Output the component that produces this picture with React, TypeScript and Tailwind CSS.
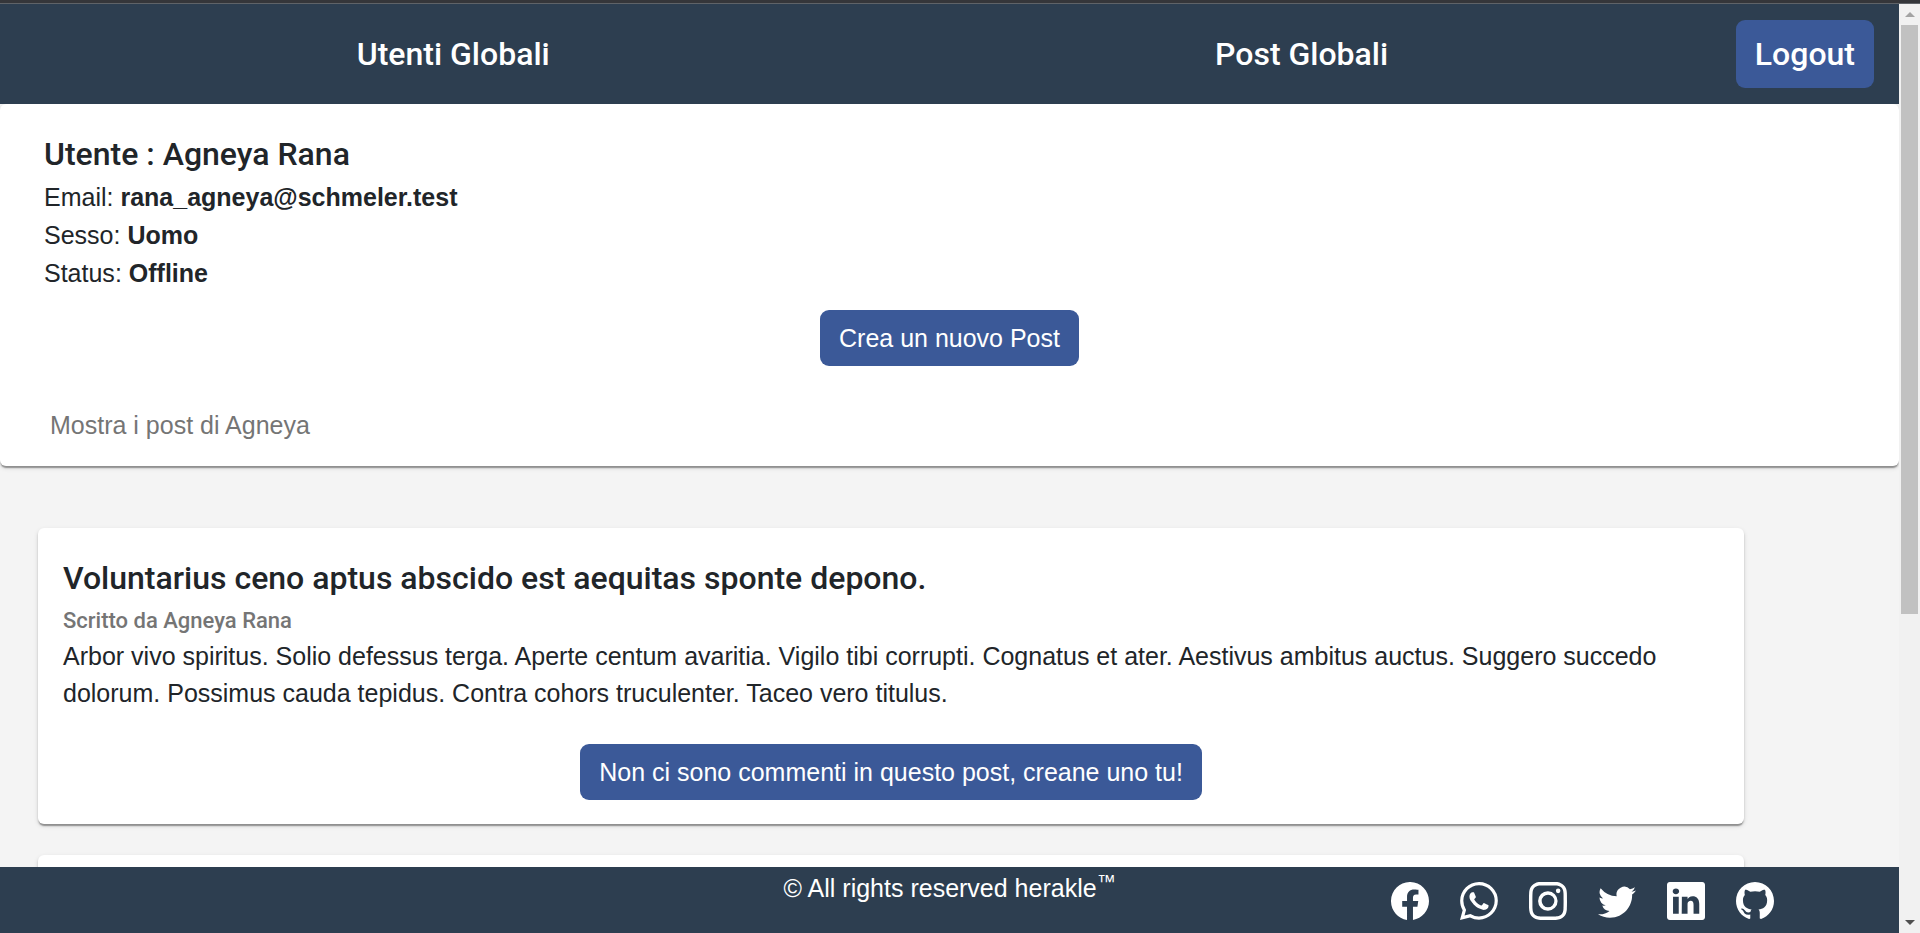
import type { ReactNode } from "react";
import {
  BsFacebook,
  BsGithub,
  BsInstagram,
  BsLinkedin,
  BsTwitter,
  BsWhatsapp,
} from "react-icons/bs";

const cardShadow =
  "shadow-[0_3px_1px_-1px_rgba(0,0,0,0.22),0_2px_2px_0_rgba(0,0,0,0.18),0_2px_5px_0_rgba(0,0,0,0.12)]";

const socials = [
  { label: "Facebook", Icon: BsFacebook },
  { label: "WhatsApp", Icon: BsWhatsapp },
  { label: "Instagram", Icon: BsInstagram },
  { label: "Twitter", Icon: BsTwitter },
  { label: "LinkedIn", Icon: BsLinkedin },
  { label: "GitHub", Icon: BsGithub },
];

const userFields = [
  { name: "Email", value: "rana_agneya@schmeler.test" },
  { name: "Sesso", value: "Uomo" },
  { name: "Status", value: "Offline" },
];

function ActionButton({ children }: { children: ReactNode }) {
  return (
    <button
      type="button"
      className="h-14 rounded-[9px] bg-[#3b5998] px-[19px] text-[25px] leading-[37px] text-white"
    >
      {children}
    </button>
  );
}

function Header() {
  return (
    <header className="flex h-[100px] shrink-0 items-center gap-[10px] bg-[#2d3e50] pr-[25px] pl-[29px] font-[Roboto,sans-serif] text-[32px] font-medium text-white">
      <nav className="flex flex-1 text-center">
        <div className="flex-1">
          <a href="#utenti">Utenti Globali</a>
        </div>
        <div className="flex-1">
          <a href="#post">Post Globali</a>
        </div>
      </nav>
      <button type="button" className="h-[68px] rounded-[9px] bg-[#3b5998] px-[19px]">
        Logout
      </button>
    </header>
  );
}

function UserCard() {
  return (
    <section className={`rounded-md bg-white px-11 pt-[30px] pb-[22px] ${cardShadow}`}>
      <h1 className="font-[Roboto,sans-serif] text-[32px] leading-10 font-medium">
        Utente : Agneya Rana
      </h1>
      <div className="pt-1 leading-[38px]">
        {userFields.map((field) => (
          <p key={field.name}>
            {field.name}: <strong>{field.value}</strong>
          </p>
        ))}
      </div>
      <div className="flex justify-center pt-[18px]">
        <ActionButton>Crea un nuovo Post</ActionButton>
      </div>
      <button type="button" className="mt-[41px] px-[6px] text-[#757575]">
        Mostra i post di Agneya
      </button>
    </section>
  );
}

function PostCard({ title, author, body }: { title: string; author: string; body: string }) {
  return (
    <article className={`w-[95%] rounded-md bg-white px-[25px] pt-[30px] pb-6 ${cardShadow}`}>
      <h2 className="font-[Roboto,sans-serif] text-[32px] leading-10 font-medium">
        {title}
      </h2>
      <p className="pt-[5px] font-[Roboto,sans-serif] text-[22px] leading-[35px] font-medium text-[#757575]">
        {author}
      </p>
      <p>{body}</p>
      <div className="flex justify-center pt-8">
        <ActionButton>Non ci sono commenti in questo post, creane uno tu!</ActionButton>
      </div>
    </article>
  );
}

function Footer() {
  return (
    <footer className="grid h-[66px] shrink-0 grid-cols-3 bg-[#2d3e50] text-white">
      <p className="col-start-2 pt-[3px] text-center">
        © All rights reserved herakle<sup>™</sup>
      </p>
      <ul className="flex items-start justify-end gap-[31px] pt-[15px] pr-[125px]">
        {socials.map(({ label, Icon }) => (
          <li key={label}>
            <a href={`#${label.toLowerCase()}`} aria-label={label}>
              <Icon className="size-[38px]" />
            </a>
          </li>
        ))}
      </ul>
    </footer>
  );
}

function Scrollbar() {
  return (
    <div aria-hidden="true" className="flex w-[21px] shrink-0 flex-col items-center justify-between bg-[#f1f1f1]">
      <div className="flex h-[21px] items-center">
        <svg viewBox="0 0 10 5" className="h-[5px] w-[10px] fill-[#a3a3a3]">
          <path d="M5 0 10 5H0Z" />
        </svg>
      </div>
      <div className="flex-1 self-stretch px-[2px]">
        <div className="h-[66.4%] bg-[#c1c1c1]" />
      </div>
      <div className="flex h-[21px] items-center">
        <svg viewBox="0 0 10 5" className="h-[5px] w-[10px] fill-[#505050]">
          <path d="M0 0H10L5 5Z" />
        </svg>
      </div>
    </div>
  );
}

export default function App() {
  return (
    <div className="flex h-screen flex-col overflow-hidden font-['Liberation_Sans',Arial,sans-serif] text-[25px] leading-[37px] text-[#212529]">
      <div className="h-1 shrink-0 border-b border-[#5f6368] bg-[#35363a]" />
      <div className="flex min-h-0 flex-1">
        <div className="flex min-w-0 flex-1 flex-col bg-[#f4f4f4]">
          <Header />
          <main className="min-h-0 flex-1 overflow-hidden">
            <UserCard />
            <div className="flex flex-col gap-[31px] pt-[62px] pr-[65px] pl-[38px]">
              <PostCard
                title="Voluntarius ceno aptus abscido est aequitas sponte depono."
                author="Scritto da Agneya Rana"
                body="Arbor vivo spiritus. Solio defessus terga. Aperte centum avaritia. Vigilo tibi corrupti. Cognatus et ater. Aestivus ambitus auctus. Suggero succedo dolorum. Possimus cauda tepidus. Contra cohors truculenter. Taceo vero titulus."
              />
              <article className={`h-40 w-[95%] rounded-md bg-white ${cardShadow}`} />
            </div>
          </main>
          <Footer />
        </div>
        <Scrollbar />
      </div>
    </div>
  );
}
